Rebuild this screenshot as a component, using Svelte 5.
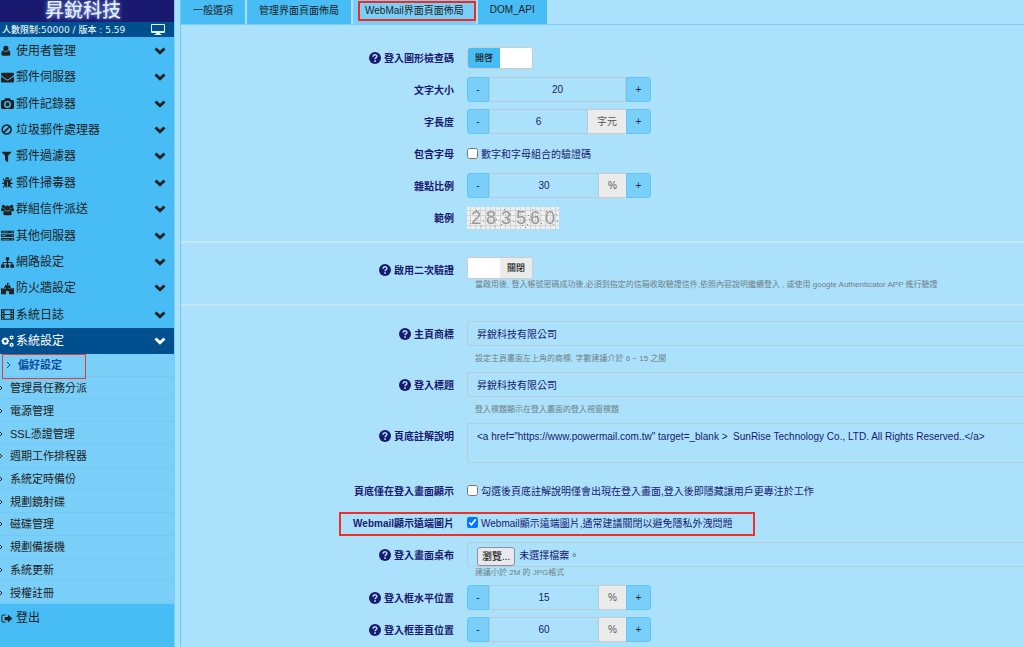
<script>
    let selectedTab = $state(2);
    let captcha = $state(true);
    let twoFactor = $state(false);
    let letters = $state(false);
    let footerOnLogin = $state(false);
    let remoteImages = $state(true);
    let brand = $state("昇銳科技有限公司");
    let loginTitle = $state("昇銳科技有限公司");
    let footer = $state(
        '<a href="https://www.powermail.com.tw" target=_blank >  SunRise Technology Co., LTD. All Rights Reserved..</a>',
    );
    let numbers = $state({ size: 20, length: 6, noise: 30, left: 15, top: 60 });

    const tabs = ["一般選項", "管理界面頁面佈局", "WebMail界面頁面佈局", "DOM_API"];

    const menu = [
        { icon: "user", name: "使用者管理" },
        { icon: "envelope", name: "郵件伺服器" },
        { icon: "camera", name: "郵件記錄器" },
        { icon: "ban", name: "垃圾郵件處理器" },
        { icon: "filter", name: "郵件過濾器" },
        { icon: "bug", name: "郵件掃毒器" },
        { icon: "users", name: "群組信件派送" },
        { icon: "server", name: "其他伺服器" },
        { icon: "sitemap", name: "網路設定" },
        { icon: "fort", name: "防火牆設定" },
        { icon: "film", name: "系統日誌" },
        { icon: "cogs", name: "系統設定", open: true },
    ];

    const submenu = [
        "偏好設定",
        "管理員任務分派",
        "電源管理",
        "SSL憑證管理",
        "週期工作排程器",
        "系統定時備份",
        "規劃鏡射碟",
        "磁碟管理",
        "規劃備援機",
        "系統更新",
        "授權註冊",
    ];

    // all drawn on a 16 x 16 grid
    const icons = {
        user: "M6 2a3.200 3.200 0 0 1 3.200 3.300C9.200 7.300 8 8.800 6 8.800S2.800 7.300 2.800 5.300A3.200 3.200 0 0 1 6 2zM2.900 7.800C3.700 9 4.800 9.700 6 9.700s2.300-.7 3.100-1.900c1.800.2 2.400 2.200 2.400 4.500 0 1.400-.9 2.200-2.100 2.200H2.600c-1.200 0-2.100-.8-2.100-2.200 0-2.300.6-4.300 2.400-4.500z",
        envelope: "M1.500 2h13A1.500 1.500 0 0 1 16 3.500v.6c0 .9-.8 1.800-1.700 2.400L9.600 9.700c-.5.400-1.100.7-1.600.7s-1.100-.3-1.600-.7L1.700 6.500C.8 5.900 0 5 0 4.100v-.6A1.500 1.500 0 0 1 1.500 2zM0 6.700c.3.300.6.600 1 .8l4.900 3.300c.6.500 1.300.9 2.100.9s1.500-.4 2.100-.9L15 7.500c.4-.2.7-.5 1-.8v6A1.500 1.500 0 0 1 14.500 14.200h-13A1.500 1.500 0 0 1 0 12.700z",
        camera: "M5 1.500h6l1.200 2.300H14a2 2 0 0 1 2 2v6.900a2 2 0 0 1-2 2H2a2 2 0 0 1-2-2V5.800a2 2 0 0 1 2-2h1.800zM8 4.900a4.300 4.300 0 1 0 0 8.600 4.300 4.300 0 0 0 0-8.600zm0 1.700a2.600 2.600 0 1 1 0 5.200 2.600 2.600 0 0 1 0-5.200z",
        ban: "M7 1.500a6.500 6.500 0 1 1 0 13 6.500 6.500 0 0 1 0-13zm3.900 4.100-6.300 6.300A4.600 4.600 0 0 0 10.900 5.600zM7 3.400A4.600 4.600 0 0 0 3.200 10.500l6.200-6.300A4.600 4.600 0 0 0 7 3.400z",
        filter: "M1.500 2h10.600c.6 0 .8.700.4 1.100L8.800 7.200v7c0 .6-.7.900-1.100.5L5.300 12.500A.9.900 0 0 1 5 12V7.200L1.100 3.100C.7 2.700.9 2 1.500 2z",
        bug: "M5 4.200a2.800 2.800 0 0 1 5.600 0zM1.800 3.700 2.800 2.900 4.700 5h6.200l1.900-2.100 1 .8-2 2.200V8.400h2.500v1.400h-2.500c0 .7-.1 1.300-.4 1.800l2.300 2.200-1 1-2.100-2.100c-.5.700-1.400 1.200-2.300 1.300V6.800h-1V14c-.9-.1-1.800-.6-2.300-1.300l-2.100 2.100-1-1 2.300-2.200c-.3-.5-.4-1.100-.4-1.800H1.300V8.400h2.500V5.900z",
        users: "M3 2a2.200 2.200 0 1 1 0 4.400A2.200 2.200 0 0 1 3 2zm10 0a2.200 2.200 0 1 1 0 4.400A2.200 2.200 0 0 1 13 2zM8 3a3.200 3.200 0 1 1 0 6.400A3.200 3.200 0 0 1 8 3zM1.300 6.300c1 .6 2.200.8 3.300.2-.1 1 .2 2 .8 2.700-1 0-1.700.4-2.300 1.100H1.500C.5 10.300 0 9.800 0 9c0-1 .3-2.400 1.300-2.700zm13.400 0C15.700 6.600 16 8 16 9c0 .8-.5 1.300-1.500 1.300h-1.600c-.6-.7-1.300-1.100-2.300-1.100.6-.7.900-1.700.8-2.700 1.100.6 2.300.4 3.300-.2zM5.200 9.400c1.700 1.300 3.900 1.300 5.600 0 1.700.1 2.400 2 2.400 3.900 0 1.100-.8 1.700-1.900 1.700H4.700c-1.100 0-1.900-.6-1.900-1.700 0-1.900.7-3.800 2.400-3.900z",
        server: "M0 2h16v3.300H0zM0 6.500h16v3.300H0zM0 11h16v3.300H0zM1.300 3.300v.7h7v-.7zm0 4.500v.7h4.500v-.7zm0 4.500v.7h9v-.7zM13 3.100v1.100h1.500V3.100zm0 4.500v1.100h1.500V7.600zm0 4.500v1.100h1.500v-1.100z",
        sitemap: "M6 1.500h4v4H8.700V7.500H14V10.500h2v4h-4.500v-4h1.200V8.700h-4v1.800H10v4H6v-4h1.300V8.700h-4v1.800h1.200v4H0v-4h2V7.500h5.300v-2H6z",
        fort: "M7.400 1h1.200l1.600.8-1.600.9v1.500h1V3.400h1.500v2h.9v3.100h.5V7.300h1v1.200h.7V7.300H16V15H9.800v-2.500a1.800 1.800 0 0 0-3.600 0V15H0V7.300h1v1.200h.8V7.300h1v1.200h1.200V5.400h.9v-2h1.500v.8h1zM5.400 7v1.600h1V7zm4.200 0v1.600h1V7z",
        film: "M0 1.500h16v13H0zM1.200 3v1.600h1.700V3zm0 3.100v1.600h1.700V6.100zm0 3.100v1.600h1.700V9.200zm0 3v1.300h1.700v-1.300zM4.300 2.700v4.600h7.400V2.700zm0 5.900v4.700h7.400V8.600zM13.100 3v1.600h1.700V3zm0 3.100v1.600h1.700V6.100zm0 3.100v1.600h1.700V9.200zm0 3v1.300h1.700v-1.300z",
        cogs: "M4.300 3h2l.3 1.400 1.300-.8 1.300 1.300-.8 1.300 1.500.4v2.100l-1.500.3.8 1.300-1.300 1.400-1.300-.8-.3 1.500h-2L4 10.900l-1.300.8-1.400-1.400.8-1.300L.600 8.700V6.600l1.500-.4-.8-1.300 1.400-1.300 1.300.8zm1 2.900a1.800 1.800 0 1 0 0 3.600 1.800 1.800 0 0 0 0-3.600zM12.400.600h1.300l.2.900 1.100-.3.600 1.100-.7.800.7.900-.6 1-1.100-.2-.3 1h-1.200l-.3-1-1.100.2-.6-1 .7-.9-.7-.8.600-1.100 1.100.3zm.6 1.700a.9.900 0 1 0 0 1.800.9.900 0 0 0 0-1.800zM12.400 9.600h1.300l.2.900 1.100-.3.600 1.100-.7.800.7.900-.6 1-1.100-.2-.3 1h-1.200l-.3-1-1.100.2-.6-1 .7-.9-.7-.8.600-1.100 1.100.3zm.6 1.700a.9.900 0 1 0 0 1.800.9.900 0 0 0 0-1.800z",
        signout: "M5.500 3v1.200H3C2 4.200 1.700 4.700 1.700 5.500v5c0 .8.300 1.300 1.300 1.300h2.500V13H3C1.300 13 .5 12 .5 10.500v-5C.5 4 1.300 3 3 3zM8.500 3l5.500 5-5.500 5v-3H4.500V6h4z",
    };

    const speckles = [
        [3, 16], [9, 3], [14, 19], [18, 10], [20, 5], [27, 19], [29, 12], [34, 17], [37, 2], [43, 7],
        [46, 14], [51, 3], [55, 18], [58, 20], [61, 8], [62, 12], [65, 2], [70, 9], [74, 16], [79, 4],
        [86, 17], [89, 7], [90, 14], [16, 14], [40, 12], [60, 17],
    ];
</script>

{#snippet icon(name)}
    <svg class="icon" viewBox="0 0 16 16" aria-hidden="true">
        <path fill-rule="evenodd" d={icons[name]} />
    </svg>
{/snippet}

{#snippet help()}
    <svg class="help-icon" viewBox="0 0 16 16" aria-hidden="true">
        <circle cx="8" cy="8" r="8" />
        <path class="hook" d="M5.500 6.200C5.500 2.800 10.700 3 10.500 6c-.1 1.600-2.400 1.700-2.400 3.700" />
        <rect x="7" y="11" width="2.200" height="2.200" />
    </svg>
{/snippet}

{#snippet toggle(id, on, flip)}
    <button {id} class="switch" class:on type="button" role="switch" aria-checked={on} onclick={flip}>
        <span class="side">{on ? "開啓" : ""}</span>
        <span class="side">{on ? "" : "關閉"}</span>
    </button>
{/snippet}

{#snippet stepper(key, unit)}
    <div class="stepper">
        <button class="minus" type="button" onclick={() => numbers[key]--}>-</button>
        <input id={key} type="text" bind:value={numbers[key]} />
        {#if unit}
            <span class="unit">{unit}</span>
        {/if}
        <button class="plus" type="button" onclick={() => numbers[key]++}>+</button>
    </div>
{/snippet}

<div class="page">
    <aside>
        <h1>昇銳科技</h1>
        <div class="version">
            <span>人數限制:50000 / 版本 : 5.59</span>
            <svg class="monitor" viewBox="0 0 14 11" aria-hidden="true">
                <path fill-rule="evenodd" d="M1 0h12a1 1 0 0 1 1 1v7a1 1 0 0 1-1 1H9v1h1.500v1h-7v-1H5V9H1a1 1 0 0 1-1-1V1a1 1 0 0 1 1-1zm0 1v6h12V1z" />
            </svg>
        </div>
        <nav>
            <ul class="menu">
                {#each menu as item}
                    <li>
                        <a class="item" class:open={item.open} href="#{item.icon}">
                            {@render icon(item.icon)}
                            <span>{item.name}</span>
                            <svg class="chevron" viewBox="0 0 12 8" aria-hidden="true">
                                <path d="M1.500 1.500 6 5.800l4.500-4.300" />
                            </svg>
                        </a>
                    </li>
                {/each}
            </ul>
            <ul class="submenu">
                {#each submenu as name, i}
                    <li>
                        <a class="subitem" class:current={i === 0} href="#sub{i}">
                            <svg class="caret" viewBox="0 0 5 8" aria-hidden="true">
                                <path d="M1 1l3 3-3 3" />
                            </svg>
                            {name}
                        </a>
                    </li>
                {/each}
            </ul>
            <a class="item logout" href="#logout">
                {@render icon("signout")}
                <span>登出</span>
            </a>
        </nav>
    </aside>

    <main>
        <div class="tabbar">
            {#each tabs as tab, i}
                <button class="tab" class:active={selectedTab === i} type="button" onclick={() => (selectedTab = i)}>
                    {tab}
                </button>
            {/each}
        </div>

        <form>
            <section>
                <div class="row">
                    <label for="captcha">{@render help()}登入圖形檢查碼</label>
                    {@render toggle("captcha", captcha, () => (captcha = !captcha))}
                </div>
                <div class="row">
                    <label for="size">文字大小</label>
                    {@render stepper("size")}
                </div>
                <div class="row">
                    <label for="length">字長度</label>
                    {@render stepper("length", "字元")}
                </div>
                <div class="row">
                    <label for="letters">包含字母</label>
                    <div class="check">
                        <input id="letters" type="checkbox" bind:checked={letters} />
                        <label for="letters">數字和字母組合的驗證碼</label>
                    </div>
                </div>
                <div class="row">
                    <label for="noise">雜點比例</label>
                    {@render stepper("noise", "%")}
                </div>
                <div class="row">
                    <span class="caption">範例</span>
                    <svg class="sample" viewBox="0 0 92 22">
                        <defs>
                            <pattern id="mesh" width="5" height="5" patternUnits="userSpaceOnUse">
                                <path d="M0 3.500h5M3.500 0v5" />
                            </pattern>
                        </defs>
                        <rect class="paper" width="92" height="22" />
                        <rect width="92" height="22" fill="url(#mesh)" />
                        <text x="4 19 34 49 63 78" y="17">283560</text>
                        {#each speckles as [x, y]}
                            <rect class="speckle" {x} {y} width="1" height="1" />
                        {/each}
                    </svg>
                </div>
            </section>

            <section>
                <div class="row top">
                    <label for="twofactor">{@render help()}啟用二次驗證</label>
                    <div class="field">
                        {@render toggle("twofactor", twoFactor, () => (twoFactor = !twoFactor))}
                        <p class="hint tight">當啟用後, 登入帳號密碼成功後,必須到指定的信箱收取驗證信件,依照內容說明繼續登入 , 或使用 google Authenticator APP 進行驗證</p>
                    </div>
                </div>
            </section>

            <section>
                <div class="row top">
                    <label for="brand">{@render help()}主頁商標</label>
                    <div class="field">
                        <input id="brand" class="text" type="text" bind:value={brand} />
                        <p class="hint">設定主頁畫面左上角的商標, 字數建議介於 6 ~ 15 之間</p>
                    </div>
                </div>
                <div class="row top">
                    <label for="logintitle">{@render help()}登入標題</label>
                    <div class="field">
                        <input id="logintitle" class="text" type="text" bind:value={loginTitle} />
                        <p class="hint">登入標題顯示在登入畫面的登入視窗標題</p>
                    </div>
                </div>
                <div class="row top note">
                    <label for="footer">{@render help()}頁底註解說明</label>
                    <textarea id="footer" class="text" bind:value={footer}></textarea>
                </div>
                <div class="row">
                    <label for="footeronly">頁底僅在登入畫面顯示</label>
                    <div class="check">
                        <input id="footeronly" type="checkbox" bind:checked={footerOnLogin} />
                        <label for="footeronly">勾選後頁底註解說明僅會出現在登入畫面,登入後即隱藏讓用戶更專注於工作</label>
                    </div>
                </div>
                <div class="row marked">
                    <label for="remote">Webmail顯示遠端圖片</label>
                    <div class="check">
                        <input id="remote" type="checkbox" bind:checked={remoteImages} />
                        <label for="remote">Webmail顯示遠端圖片,通常建議關閉以避免隱私外洩問題</label>
                    </div>
                </div>
                <div class="row top">
                    <label for="wallpaper">{@render help()}登入畫面桌布</label>
                    <div class="field">
                        <div class="text file">
                            <input id="wallpaper" type="file" accept="image/jpeg" />
                            <label class="browse" for="wallpaper">瀏覽...</label>
                            <span>未選擇檔案。</span>
                        </div>
                        <p class="hint tight">建議小於 2M 的 JPG格式</p>
                    </div>
                </div>
                <div class="row">
                    <label for="left">{@render help()}登入框水平位置</label>
                    {@render stepper("left", "%")}
                </div>
                <div class="row">
                    <label for="top">{@render help()}登入框垂直位置</label>
                    {@render stepper("top", "%")}
                </div>
            </section>
        </form>
    </main>
</div>

<style>
    :global(body) {
        background: #abe1fa;
    }
    .page {
        display: flex;
        height: 100vh;
        overflow: hidden;
        color: #191970;
        font-family: "Liberation Sans", "Noto Sans CJK TC", sans-serif;
        font-size: 10px;
    }
    .page *,
    .page *::after {
        box-sizing: border-box;
    }
    button,
    input,
    textarea {
        color: inherit;
        font: inherit;
    }
    ul {
        list-style: none;
        margin: 0;
        padding: 0;
    }
    aside {
        flex: 0 0 175px;
        background: #47bcf5;
        border-right: 1px solid #7acff8;
    }
    h1 {
        margin: 0;
        height: 22px;
        padding-right: 8px;
        background: #191970;
        color: #e6ecfa;
        font-size: 19px;
        font-weight: 500;
        line-height: 22px;
        text-align: center;
        text-shadow: 0 0 4px #8ab4ff;
    }
    .version {
        display: flex;
        align-items: center;
        justify-content: space-between;
        height: 15px;
        padding: 0 9px 0 2px;
        background: #00508f;
        color: #e4f2fc;
        font-family: "DejaVu Sans", "Noto Sans CJK TC", sans-serif;
        font-size: 9px;
        font-weight: 500;
        white-space: nowrap;
    }
    .monitor {
        width: 14px;
        height: 11px;
        fill: #e4f2fc;
    }
    .menu {
        display: grid;
        grid-auto-rows: 1fr;
        height: 317px;
    }
    .item {
        display: flex;
        align-items: center;
        gap: 2px;
        height: 100%;
        padding: 1px 8px 0 1px;
        color: #222;
        font-size: 12px;
        line-height: 16px;
        text-decoration: none;
    }
    .item span {
        flex: 1;
    }
    .item.open {
        background: #00508f;
        color: #fff;
    }
    .icon {
        width: 13px;
        height: 13px;
        fill: currentColor;
    }
    .chevron {
        width: 12px;
        height: 8px;
        fill: none;
        stroke: currentColor;
        stroke-width: 3px;
    }
    .submenu {
        display: grid;
        grid-auto-rows: 1fr;
        height: 250px;
        background: #7acff8;
    }
    .submenu li {
        border-bottom: 1px solid #6fcaf6;
    }
    .subitem {
        display: flex;
        align-items: center;
        gap: 7px;
        height: 100%;
        margin-left: -2px;
        padding-top: 1px;
        color: #222;
        font-size: 11px;
        line-height: 14px;
        text-decoration: none;
    }
    .subitem.current {
        position: relative;
        padding-left: 8px;
        color: #0d4da1;
        font-weight: bold;
    }
    .subitem.current::after {
        content: "";
        position: absolute;
        top: 0;
        left: 4px;
        width: 84px;
        height: 25px;
        border: 1px solid #e8392f;
    }
    .caret {
        width: 5px;
        height: 8px;
        fill: none;
        stroke: currentColor;
        stroke-width: 1px;
    }
    .logout {
        height: 27px;
    }

    main {
        flex: 1;
        min-width: 0;
        margin-left: 5px;
        border-left: 1px solid #6bcbf7;
    }
    .tabbar {
        display: flex;
        gap: 2px;
        height: 25px;
        border-bottom: 1px solid #7acff8;
    }
    .tab {
        position: relative;
        padding: 0 12px 5px;
        border: none;
        background: #47bcf5;
        color: #222;
        white-space: nowrap;
    }
    .tab.active {
        background: #7acff8;
    }
    .tab.active::after {
        content: "";
        position: absolute;
        top: 1px;
        right: 0;
        left: 5px;
        height: 20px;
        border: 2px solid #f02b1d;
    }

    form {
        margin: 0;
    }
    section {
        display: flex;
        flex-direction: column;
        gap: 7px;
        padding: 14px 0;
        border-bottom: 2px solid #c6e7f7;
    }
    section:first-child {
        padding: 20px 0 11px;
    }
    section:last-child {
        padding-top: 15px;
        border-bottom: none;
    }
    .row {
        display: grid;
        grid-template-columns: 273px minmax(0, 1fr);
        column-gap: 13px;
        align-items: center;
        min-height: 25px;
    }
    .row.top {
        align-items: start;
    }
    .row.note {
        margin-bottom: 8px;
    }
    .row > label,
    .caption {
        display: flex;
        align-items: center;
        justify-content: flex-end;
        gap: 3px;
        height: 25px;
        font-weight: bold;
        white-space: nowrap;
    }
    .help-icon {
        width: 12px;
        height: 12px;
        fill: #191970;
    }
    .help-icon rect {
        fill: #abe1fa;
    }
    .help-icon .hook {
        fill: none;
        stroke: #abe1fa;
        stroke-width: 2px;
    }
    .marked {
        position: relative;
    }
    .marked::after {
        content: "";
        position: absolute;
        top: 2px;
        left: 158px;
        width: 416px;
        height: 24px;
        border: 2px solid #ee3028;
        pointer-events: none;
    }
    .switch {
        display: flex;
        width: 66px;
        height: 22px;
        padding: 0;
        border: 1px solid #ccc;
        border-radius: 3px;
        background: #fff;
        overflow: hidden;
        color: #222;
        font-size: 9px;
        font-weight: 500;
    }
    .side {
        flex: 1;
        height: 100%;
        line-height: 20px;
        text-align: center;
    }
    .switch.on .side:first-child {
        background: #47bcf5;
    }
    .switch:not(.on) .side:last-child {
        background: #ebebeb;
    }
    .stepper {
        display: flex;
        width: 184px;
        height: 25px;
    }
    .stepper input {
        flex: 1;
        min-width: 0;
        padding: 0;
        border: 1px solid #b4cdd9;
        background: none;
        text-align: center;
    }
    .stepper button {
        padding: 0;
        border: 1px solid #62c5f5;
        background: #7acff8;
        color: #222;
    }
    .stepper .minus {
        width: 22px;
        border-radius: 3px 0 0 3px;
    }
    .stepper .plus {
        width: 25px;
        border-radius: 0 3px 3px 0;
    }
    .unit {
        padding: 0 9px;
        border: 1px solid #ccc;
        border-width: 1px 0;
        background: #ebebeb;
        color: #555;
        line-height: 23px;
    }
    .check {
        display: flex;
        align-items: center;
        gap: 3px;
        white-space: nowrap;
    }
    .check input {
        width: 11px;
        height: 11px;
        margin: 0;
    }
    .sample {
        width: 92px;
        height: 22px;
        overflow: visible;
    }
    .sample .paper {
        fill: #efefef;
    }
    .sample pattern path {
        stroke: #d4d4d4;
    }
    .sample text {
        fill: #999;
        font-family: "Liberation Sans", sans-serif;
        font-size: 18px;
    }
    .speckle {
        fill: #888;
    }
    .text {
        display: block;
        width: 100%;
        height: 25px;
        padding: 0 9px;
        border: 1px solid #b4cdd9;
        border-right: none;
        border-radius: 3px 0 0 3px;
        background: none;
    }
    textarea.text {
        height: 40px;
        padding: 6px 9px;
        line-height: 13px;
        resize: none;
    }
    .hint {
        margin: 0;
        padding: 7px 0 0 8px;
        color: #6f7f88;
        font-size: 8px;
        line-height: 12px;
        white-space: nowrap;
    }
    .hint.tight {
        padding-top: 0;
        line-height: 11px;
    }
    .file {
        display: flex;
        align-items: flex-end;
        gap: 4px;
        line-height: 20px;
    }
    .file input {
        position: absolute;
        width: 1px;
        height: 1px;
        opacity: 0;
    }
    .browse {
        height: 19px;
        padding: 0 4px;
        border: 1px solid #8f8f9d;
        border-radius: 3px;
        background: #e9e9ed;
        color: #222;
        font-weight: 500;
        line-height: 17px;
    }
</style>
